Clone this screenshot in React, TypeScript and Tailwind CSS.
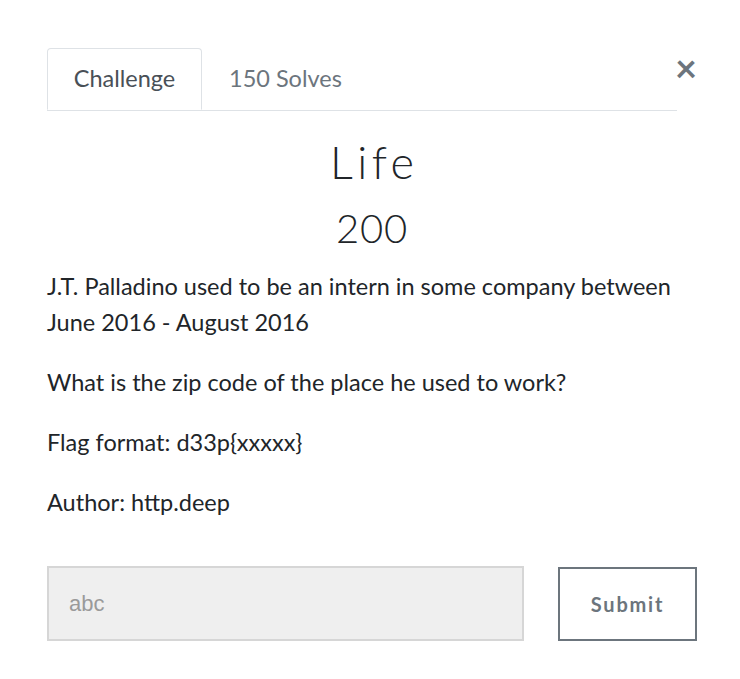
export default function App() {
  return (
    <div className="min-h-screen bg-white" style={{ fontFamily: "Lato, 'Open Sans', sans-serif" }}>
      <div className="pl-[47px] pr-[43px] pt-[48px]">
        {/* tabs */}
        <div className="flex items-start">
          <div className="flex flex-1 border-b border-[#dee2e6]">
            <div className="-mb-px flex h-[62px] w-[155px] items-center justify-center rounded-t border border-b-white border-[#dee2e6] bg-white text-[23.5px] text-[#495057]">
              Challenge
            </div>
            <div className="flex h-[62px] items-center pl-[27px] text-[23.5px] text-[#6c757d]">150 Solves</div>
          </div>
          <button className="-ml-[2px] w-[22px] text-[38px] font-bold leading-none text-[#6c757d]">×</button>
        </div>

        {/* title */}
        <div className="mt-[23px] text-center">
          <h3 className="pl-[0.1em] text-[45px] font-light leading-[56px] tracking-[0.1em] text-[#212529]">Life</h3>
          <h4 className="mt-[12px] text-[40px] font-light leading-[52px] tracking-[0.02em] text-[#212529]">200</h4>
        </div>

        {/* description */}
        <div className="mt-[14px] text-[23.5px] leading-[36px] text-[#212529]">
          <p className="mb-[24px]">
            J.T. Palladino used to be an intern in some company between
            <br />
            June 2016 - August 2016
          </p>
          <p className="mb-[24px]">What is the zip code of the place he used to work?</p>
          <p className="mb-[24px]">Flag format: d33p{"{xxxxx}"}</p>
          <p>Author: http.deep</p>
        </div>

        {/* submit row */}
        <div className="mt-[46px] flex items-center">
          <input
            className="h-[75px] w-[477px] border-2 border-[#d6d6d6] bg-[#efefef] px-[20px] text-[22px] text-[#555] outline-none placeholder:text-[#9a9a9a]"
            style={{ fontFamily: "'Liberation Sans', Arial, sans-serif" }}
            placeholder="abc"
          />
          <button className="ml-auto h-[74px] w-[139px] border-2 border-[#6c757d] bg-white text-[20px] font-bold tracking-[0.09em] text-[#6c757d]">
            Submit
          </button>
        </div>
      </div>
    </div>
  );
}
